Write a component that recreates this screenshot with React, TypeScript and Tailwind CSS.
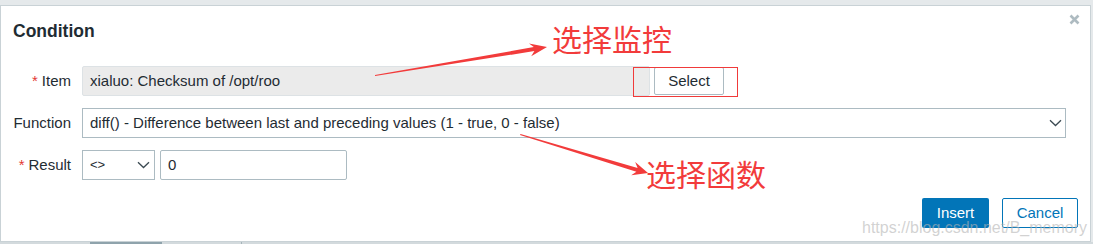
import React from "react";

const font = { fontFamily: '"Liberation Sans", Arial, "Noto Sans CJK SC", sans-serif' };

function Chevron() {
  return (
    <svg width="13" height="8" viewBox="0 0 13 8" className="shrink-0">
      <path d="M1 1.2 L6.5 6.5 L12 1.2" fill="none" stroke="#3b4a52" strokeWidth="1.3" />
    </svg>
  );
}

function Label({ text, required }: { text: string; required?: boolean }) {
  return (
    <div className="w-[58px] shrink-0 text-right text-[15px] text-[#1f2c33]">
      {required && <span className="mr-[4px] text-[#e33734]">*</span>}
      {text}
    </div>
  );
}

export default function App() {
  return (
    <div className="relative h-[244px] w-[1093px] overflow-hidden bg-[#e5e9eb]" style={font}>
      {/* dialog */}
      <div className="relative mt-[5px] h-[237px] w-[1091px] border border-[#c9d2d6] bg-white">
        <div className="pl-[12px] pt-[13px] text-[17.5px] font-bold leading-[24px] text-[#1f2c33]">
          Condition
        </div>

        <button className="absolute right-[9px] top-[7px] p-[1px]">
          <svg width="11" height="11" viewBox="0 0 11 11">
            <path d="M1.5 1.5 L9.5 9.5 M9.5 1.5 L1.5 9.5" stroke="#aebbc1" strokeWidth="2.6" />
          </svg>
        </button>

        <div className="mt-[23px] flex flex-col gap-[12px] pl-[12px]">
          {/* item */}
          <div className="flex h-[30px] items-center">
            <Label text="Item" required />
            <div className="ml-[11px] flex h-[30px] w-[568px] items-center rounded-[2px] border border-[#dde2e5] bg-[#ebebeb] px-[7px] text-[15px] text-[#1f2c33]">
              xialuo: Checksum of /opt/roo
            </div>
            <button className="ml-[4px] h-[28px] w-[70px] rounded-[2px] border border-[#acbbc2] bg-white text-[15px] text-[#1f2c33]">
              Select
            </button>
          </div>

          {/* function */}
          <div className="flex h-[30px] items-center">
            <Label text="Function" />
            <div className="ml-[11px] flex h-[30px] w-[984px] items-center justify-between border border-[#acbbc2] bg-white pl-[7px] pr-[3px] text-[15px] text-[#1f2c33]">
              <span>diff() - Difference between last and preceding values (1 - true, 0 - false)</span>
              <Chevron />
            </div>
          </div>

          {/* result */}
          <div className="flex h-[30px] items-center">
            <Label text="Result" required />
            <div className="ml-[11px] flex h-[30px] w-[73px] items-center justify-between border border-[#acbbc2] bg-white pl-[7px] pr-[4px] text-[13px] text-[#1f2c33]">
              <span>&lt;&gt;</span>
              <Chevron />
            </div>
            <div className="ml-[5px] flex h-[30px] w-[187px] items-center rounded-[2px] border border-[#acbbc2] bg-white px-[7px] text-[15px] text-[#1f2c33]">
              0
            </div>
          </div>
        </div>

        <div className="mt-[18px] flex justify-end gap-[13px] pr-[12px]">
          <button className="h-[30px] w-[67px] rounded-[2px] bg-[#0275b8] text-[15px] text-white">
            Insert
          </button>
          <button className="h-[30px] w-[76px] rounded-[2px] border border-[#0275b8] bg-white text-[15px] text-[#0275b8]">
            Cancel
          </button>
        </div>
      </div>

      {/* strip under the dialog */}
      <div className="flex h-[3px]">
        <div className="w-[90px] bg-[#d3dadd]" />
        <div className="w-[72px] bg-[#8fa3ac]" />
        <div className="w-[79px] bg-[#d3dadd]" />
        <div className="w-[1px] bg-[#a5b4ba]" />
        <div className="flex-1 bg-[#d3dadd]" />
      </div>

      {/* watermark */}
      <div className="pointer-events-none absolute left-[862px] top-[218px] text-[16px] leading-[20px] text-[#b4b4b4]/60">
        https://blog.csdn.net/B_memory
      </div>

      {/* annotations */}
      <div className="pointer-events-none absolute left-[633px] top-[67px] h-[30px] w-[105px] border border-[#f03a3a]" />
      <svg className="pointer-events-none absolute inset-0" width="1093" height="244">
        <polygon
          points="375,76 534.4,51.1 531.2,56.2 547,47 529,43.4 533.8,47.1 375,75"
          fill="#f23b3b"
        />
        <polygon
          points="520,135 636.4,171.7 631.2,175.3 648,173 635.2,161.9 637.6,167.9 520.5,134"
          fill="#f23b3b"
        />
      </svg>
      <div
        className="pointer-events-none absolute left-[552px] top-[23px] text-[30px] leading-none text-[#f23b3b]"
        style={{ fontFamily: '"Noto Sans CJK SC", sans-serif' }}
      >
        选择监控
      </div>
      <div
        className="pointer-events-none absolute left-[646px] top-[158px] text-[30px] leading-none text-[#f23b3b]"
        style={{ fontFamily: '"Noto Sans CJK SC", sans-serif' }}
      >
        选择函数
      </div>
    </div>
  );
}
